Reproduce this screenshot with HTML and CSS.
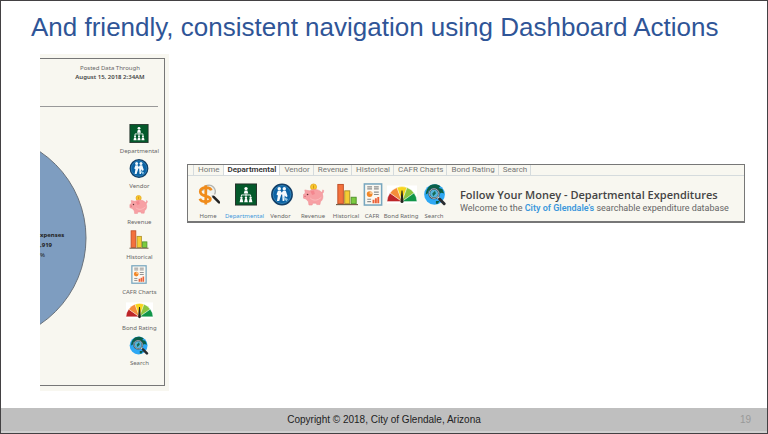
FILE: index.html
```html
<!DOCTYPE html>
<html lang="en">
<head>
    <meta charset="UTF-8">
    <meta name="viewport" content="width=device-width, initial-scale=1.0">
    <title>Dashboard Actions</title>
    <link rel="stylesheet" href="styles.css">
</head>
<body>

    <!-- Shared icons -->
    <svg class="sprite" aria-hidden="true">
        <symbol id="icon-home" viewBox="0 0 24 24">
            <path d="M5 8a7 7 0 0 1 12-4 7 7 0 0 1 1 8" fill="#eef1ee" stroke="#b5b5b0" stroke-width="1.5"/>
            <path d="M14.500 7.500C14 5.500 12 4.500 9 4.500 5 4.500 2.500 6 2.500 9s2.500 3.800 6 4.700 5 1.500 5 3.300-2 3-5 3-5.500-1-6.500-3.300M8.500 2v21" fill="none" stroke="#f08c1c" stroke-width="3"/>
            <path d="M15 13l2.500 2" stroke="#999" stroke-width="1.500"/>
            <path d="M17 14.500l6 6" stroke="#222" stroke-width="2.800" stroke-linecap="round"/>
        </symbol>
        <symbol id="icon-departmental" viewBox="0 0 24 24">
            <rect x="0.500" y="0.500" width="23" height="23" fill="#04592b" stroke="#222c26"/>
            <g fill="#fff">
                <circle cx="12" cy="5.500" r="1.800"/>
                <path d="M9.500 11l1-3.500h3l1 3.500z"/>
                <circle cx="7" cy="15.500" r="1.300"/>
                <circle cx="12" cy="15.500" r="1.300"/>
                <circle cx="17" cy="15.500" r="1.300"/>
                <path d="M5 20.500l.8-3.500h2.400l.8 3.500zM10 20.500l.8-3.500h2.400l.8 3.500zM15 20.500l.8-3.500h2.400l.8 3.500z"/>
            </g>
            <path d="M12 11v3M7 14v-1.500h10V14" fill="none" stroke="#fff" stroke-width="1"/>
        </symbol>
        <symbol id="icon-vendor" viewBox="0 0 24 24">
            <circle cx="12" cy="12" r="11" fill="#0b62a4" stroke="#123f68" stroke-width="1.800"/>
            <circle cx="12" cy="12" r="9.800" fill="none" stroke="#4a9fd0" stroke-width="0.600"/>
            <g fill="#f4f9fc">
                <circle cx="9" cy="5.700" r="1.900"/>
                <circle cx="14.500" cy="5.700" r="1.900"/>
                <path d="M7.500 8h3l1.300 2 1.300-2h3l2 6-1.500 1-1.600-2-.5 6h-1.800l-.5-7h-1l-2.200 7H6.500l1-6-1.500-1z"/>
            </g>
            <path d="M13.500 14.500l5 2.500-1.500 2.500-3-3z" fill="#8fc3e3"/>
        </symbol>
        <symbol id="icon-revenue" viewBox="0 0 24 24">
            <circle cx="11.500" cy="3.800" r="3.300" fill="#f7c92e" stroke="#e3a51b" stroke-width="0.800"/>
            <path d="M11.500 2v3.500" stroke="#d48c12" stroke-width="1"/>
            <path d="M2 7l5 1c4-2.500 10-2 13 1.500 1-.2 1.500-1 1.500-2.500l1 .5c0 2-.5 3-1.500 3.500 1.500 4 .5 7-2 9l-.5 3h-3.500l-.5-1.500h-4l-.5 2H6.500l-.5-3.500-2.500-3L.5 16v-4l2-1.500z" fill="#f7a0a4" stroke="#ef8b91" stroke-width="0.600"/>
            <path d="M8 8.500l4-1 1 4-3 1z" fill="#f4868e"/>
            <path d="M8 16c3 3 8 3 12-1" fill="none" stroke="#fbbfc0" stroke-width="1"/>
            <circle cx="5" cy="12" r="0.900" fill="#5f3438"/>
            <path d="M1.500 14h1.500" stroke="#c95f68" stroke-width="1"/>
        </symbol>
        <symbol id="icon-historical" viewBox="0 0 24 24">
            <rect x="2" y="1" width="6" height="21" fill="#f3713c" stroke="#bd4a24"/>
            <rect x="9.500" y="8" width="5.500" height="14" fill="#f4cd34" stroke="#ab8c24"/>
            <rect x="16.500" y="15" width="5.500" height="7" fill="#7bcb3f" stroke="#4f9229"/>
            <path d="M0 23h24" stroke="#765f48" stroke-width="1.300"/>
        </symbol>
        <symbol id="icon-cafr" viewBox="0 0 20 24">
            <rect x="1" y="1" width="18" height="22" fill="#fbf8f1" stroke="#78a7bf" stroke-width="1.600"/>
            <path d="M4 4h5M11 4h5M4 6.200h5M11 6.200h5M11 9.500h5M11 12h5M4 17h4M4 19.500h4" stroke="#8d8d8d" stroke-width="1.200"/>
            <circle cx="6.500" cy="11.500" r="3" fill="#f28727"/>
            <path d="M6.500 11.500v-3a3 3 0 0 1 3 3z" fill="#f8bf83"/>
            <path d="M9.500 21v-3.500h2V21zM12 21v-5h2v5zM14.500 21v-6.500h2V21z" fill="#ec6238"/>
        </symbol>
        <symbol id="icon-bond" viewBox="0 0 30 18">
            <rect width="30" height="18" fill="#fff"/>
            <g stroke="#fff" stroke-width="0.400">
                <path d="M15 16H0A15 15 0 0 1 3 7.500z" fill="#bd2528"/>
                <path d="M15 16L3 7.500a15 15 0 0 1 7-5.500z" fill="#f58d3a"/>
                <path d="M15 16L10 2a15 15 0 0 1 10 0z" fill="#f8d51c"/>
                <path d="M15 16l5-14a15 15 0 0 1 7 5.500z" fill="#8bc53f"/>
                <path d="M15 16l12-8.500a15 15 0 0 1 3 8.500z" fill="#109548"/>
            </g>
            <path d="M13.500 16l1-11h1l1 11a1.500 1.500 0 0 1-3 0z" fill="#26251f"/>
        </symbol>
        <symbol id="icon-search" viewBox="0 0 24 24">
            <circle cx="11.500" cy="12" r="11.300" fill="#2ea8f4"/>
            <path d="M7 2c3-1.500 7-2 11 1l-2 2 4 1 2 5-3-1-1 1-4-5-5-1-4 3-1 3-2 1c0-4 2-8 5-10zM13 19l4 0-2 3h-2z" fill="#0b6048"/>
            <circle cx="11" cy="11" r="5.300" fill="#63b9d4" fill-opacity="0.750" stroke="#34434b" stroke-width="2"/>
            <circle cx="11" cy="11" r="5.300" fill="none" stroke="#ccdadf" stroke-width="0.800"/>
            <path d="M9 11l3-3 1 3-3 3z" fill="#176b54"/>
            <path d="M15 15l2 2" stroke="#ddd" stroke-width="2"/>
            <path d="M17 17l5 5" stroke="#292d31" stroke-width="3.200" stroke-linecap="round"/>
        </symbol>
    </svg>

    <h1>And friendly, consistent navigation using Dashboard Actions</h1>

    <main class="slide-content">
        <section class="side-panel">
            <div class="side-frame">
                <div class="posted">
                    <p>Posted Data Through</p>
                    <p><strong>August 15, 2018 2:34AM</strong></p>
                </div>
                <div class="side-body">
                    <div class="pie">
                        <svg class="pie-shape" viewBox="0 0 47 176" aria-hidden="true">
                            <circle cx="-58" cy="88" r="104" fill="#7e9dc0" stroke="#69727c" stroke-width="1"/>
                        </svg>
                        <div class="pie-label">
                            <p><strong>xpenses</strong></p>
                            <p><strong>,919</strong></p>
                            <p>%</p>
                        </div>
                    </div>
                    <nav class="side-nav">
                        <a href="#departmental"><svg class="icon"><use href="#icon-departmental"/></svg>Departmental</a>
                        <a href="#vendor"><svg class="icon"><use href="#icon-vendor"/></svg>Vendor</a>
                        <a href="#revenue"><svg class="icon"><use href="#icon-revenue"/></svg>Revenue</a>
                        <a href="#historical"><svg class="icon"><use href="#icon-historical"/></svg>Historical</a>
                        <a href="#cafr"><svg class="icon"><use href="#icon-cafr"/></svg>CAFR Charts</a>
                        <a href="#bond"><svg class="icon icon-wide"><use href="#icon-bond"/></svg>Bond Rating</a>
                        <a href="#search"><svg class="icon"><use href="#icon-search"/></svg>Search</a>
                    </nav>
                </div>
            </div>
        </section>

        <section class="dashboard">
            <div class="tabs" role="tablist">
                <button role="tab">Home</button>
                <button role="tab" class="active" aria-selected="true">Departmental</button>
                <button role="tab">Vendor</button>
                <button role="tab">Revenue</button>
                <button role="tab">Historical</button>
                <button role="tab">CAFR Charts</button>
                <button role="tab">Bond Rating</button>
                <button role="tab">Search</button>
            </div>
            <div class="dashboard-body">
                <nav class="icon-nav">
                    <a href="#home"><svg class="icon"><use href="#icon-home"/></svg>Home</a>
                    <a href="#departmental" class="current"><svg class="icon"><use href="#icon-departmental"/></svg>Departmental</a>
                    <a href="#vendor"><svg class="icon"><use href="#icon-vendor"/></svg>Vendor</a>
                    <a href="#revenue"><svg class="icon"><use href="#icon-revenue"/></svg>Revenue</a>
                    <a href="#historical"><svg class="icon"><use href="#icon-historical"/></svg>Historical</a>
                    <a href="#cafr"><svg class="icon"><use href="#icon-cafr"/></svg>CAFR</a>
                    <a href="#bond"><svg class="icon icon-wide"><use href="#icon-bond"/></svg>Bond Rating</a>
                    <a href="#search"><svg class="icon"><use href="#icon-search"/></svg>Search</a>
                </nav>
                <div class="intro">
                    <h2>Follow Your Money - Departmental Expenditures</h2>
                    <p>Welcome to the <a href="#glendale">City of Glendale’s</a> searchable expenditure database</p>
                </div>
            </div>
        </section>
    </main>

    <footer>
        <span class="copyright">Copyright © 2018, City of Glendale, Arizona</span>
        <span class="page-number">19</span>
    </footer>

</body>
</html>
```
FILE: styles.css
```css
* {
    margin: 0;
    padding: 0;
    box-sizing: border-box;
}

body {
    display: flex;
    flex-direction: column;
    min-height: 100vh;
    border: 1px solid #434143;
    background-color: #fff;
    font-family: "Liberation Sans", Arial, sans-serif;
}

a {
    color: inherit;
    text-decoration: none;
}

.sprite {
    display: none;
}

h1 {
    padding: 11px 30px 12px;
    color: #2f5597;
    font-size: 26px;
    font-weight: normal;
    line-height: 30px;
}

.slide-content {
    flex: 1;
    display: flex;
    gap: 18px;
    padding: 0 22px 17px 39px;
    font-family: "Noto Sans", "Open Sans", sans-serif;
    color: #666;
}

/* Side panel */
.side-panel {
    display: flex;
    flex: 0 0 129px;
    padding: 4px 4px 5px 0;
    background-color: #f8f7f0;
}

.side-frame {
    flex: 1;
    display: flex;
    flex-direction: column;
    border: 1px solid #777;
    border-left: none;
}

.posted {
    margin-right: 6px;
    padding: 5px 0 24px 22px;
    border-bottom: 1px solid #999;
    font-size: 6px;
    line-height: 9px;
    text-align: center;
}

.posted strong {
    color: #444;
    font-weight: 600;
}

.side-body {
    flex: 1;
    display: flex;
    justify-content: space-between;
}

.pie {
    position: relative;
    align-self: center;
    width: 47px;
    padding-bottom: 16px;
}

.pie-shape {
    display: block;
    width: 100%;
}

.pie-label {
    position: absolute;
    top: 80px;
    left: 0;
    color: #222;
    font-size: 6px;
    line-height: 10px;
}

.side-nav {
    display: flex;
    flex-direction: column;
    justify-content: space-between;
    padding: 17px 5px 18px 0;
    font-size: 6px;
    line-height: 8px;
}

.side-nav a,
.icon-nav a {
    display: flex;
    flex-direction: column;
    align-items: center;
    white-space: nowrap;
}

.side-nav .icon {
    width: 20px;
    height: 19px;
    margin-bottom: 4px;
}

.side-nav .icon-wide {
    width: 27px;
}

/* Dashboard header */
.dashboard {
    flex: 1;
    align-self: flex-start;
    margin-top: 110px;
    border: 1px solid #777;
    border-bottom-width: 2px;
    background-color: #f8f7f0;
}

.tabs {
    display: flex;
    padding-left: 5px;
    border-bottom: 1px solid #d5dbdd;
}

.tabs button {
    padding: 0 3px 0 4px;
    border: none;
    border-right: 1px solid #d5dbdd;
    background: none;
    color: #777;
    font-family: Roboto, sans-serif;
    font-size: 8px;
    line-height: 10px;
}

.tabs button:first-child {
    border-left: 1px solid #d5dbdd;
}

.tabs .active {
    background-color: #fff;
    color: #333;
    font-weight: 600;
}

.dashboard-body {
    display: flex;
    align-items: center;
    gap: 12px;
    padding-left: 4px;
}

.icon-nav {
    display: grid;
    grid-template-columns: 32px 41px 31px 34px 32px 20px 38px 28px;
    padding-top: 7px;
    font-size: 6px;
    line-height: 9px;
}

.icon-nav .icon {
    width: 24px;
    height: 23px;
    margin-bottom: 6px;
    padding-left: 2px;
}

.icon-nav .icon-wide {
    width: 32px;
}

.icon-nav .current,
.intro a {
    color: #3c98dc;
}

.intro {
    padding-top: 4px;
}

.intro h2 {
    color: #444;
    font-family: "Open Sans", sans-serif;
    font-size: 11px;
    font-weight: 600;
    line-height: 15px;
}

.intro p {
    font-family: Roboto, sans-serif;
    font-size: 9px;
    line-height: 12px;
}

.intro a {
    font-weight: 600;
}

footer {
    display: grid;
    grid-template-columns: 1fr auto 1fr;
    align-items: center;
    padding: 0 16px;
    border-bottom: 2px solid #d0d0d0;
    background-color: #bfbfbf;
    color: #222;
    font-size: 10px;
    line-height: 23px;
}

.copyright {
    grid-column: 2;
}

.page-number {
    color: #999;
    text-align: right;
}
```
